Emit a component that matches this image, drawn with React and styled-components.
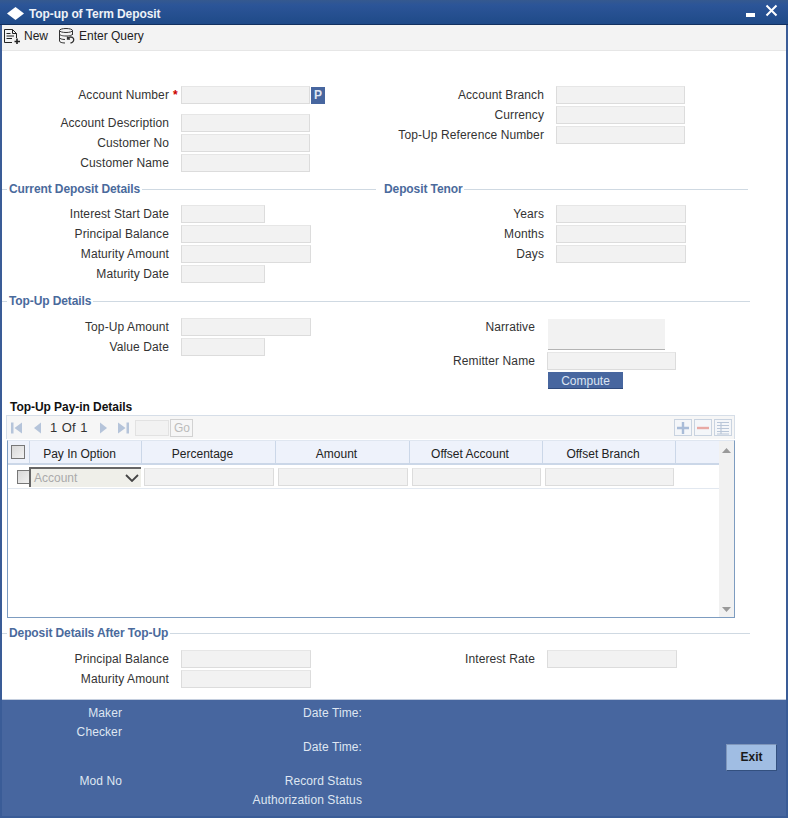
import React from 'react'
import styled, { createGlobalStyle } from 'styled-components'

const Global = createGlobalStyle`
  html, body { margin: 0; padding: 0; background: #fff; }
  * { box-sizing: border-box; }
`

function App() {
  return (
    <>
      <Global />
      <Win>
        <TitleBar>
          <TitleLeft>
            <svg width="17" height="17" viewBox="0 0 17 17"><path d="M8.5 2 17 8.5 8.5 15 0 8.5Z" fill="#fff" /></svg>
            <span>Top-up of Term Deposit</span>
          </TitleLeft>
          <Controls>
            <svg width="10" height="5" viewBox="0 0 10 5"><rect y="0" width="9" height="4" fill="#fff" /></svg>
            <svg width="13" height="13" viewBox="0 0 13 13"><path d="M1.5 1.5 11.5 11.5M11.5 1.5 1.5 11.5" stroke="#fff" strokeWidth="2" /></svg>
          </Controls>
        </TitleBar>
        <Toolbar>
          <ToolBtn>
            <svg width="18" height="18" viewBox="0 0 18 18" fill="none" stroke="#222" strokeWidth="1">
              <path d="M1.5 15.5V2.5H9.5L13.5 6.5V11M9.5 2.5V6.5H13.5M1.5 15.5H9M3.500 6.5H7.5M3.5 9H11M3.5 11.5H9" />
              <path d="M14 11.5V17M11.5 14.5H17" strokeWidth="1.6" />
            </svg>
            New
          </ToolBtn>
          <ToolBtn>
            <svg width="18" height="18" viewBox="0 0 18 18" fill="none" stroke="#333" strokeWidth="1">
              <ellipse cx="8" cy="3.5" rx="6.5" ry="2" />
              <path d="M1.5 3.5V14c0 1.2 2.5 2 5.5 2M14.5 3.5V8M1.5 7c0 1.2 3 2 6.5 2s6.5-.8 6.5-2M1.5 10.5c0 1.2 2.5 2 5.5 2" />
              <path d="M9.5 11.5c1.5-2 5-2 6 0 .8 2-.5 4-3 4.5M9.5 9.5v2.5h2.5" strokeWidth="1.3" />
            </svg>
            Enter Query
          </ToolBtn>
        </Toolbar>

        <Form>
          <Columns $pt={34}>
            <div>
              <Row>
                <Label>Account Number</Label>
                <Star>*</Star>
                <Input $w={129} $ml={5} />
                <LovBtn>P</LovBtn>
              </Row>
              <Row $mt={8}><Label>Account Description</Label><Input $w={129} /></Row>
              <Row><Label>Customer No</Label><Input $w={129} /></Row>
              <Row><Label>Customer Name</Label><Input $w={129} /></Row>
            </div>
            <div>
              <Row><Label $w={168}>Account Branch</Label><Input $w={129} /></Row>
              <Row><Label $w={168}>Currency</Label><Input $w={129} /></Row>
              <Row><Label $w={168}>Top-Up Reference Number</Label><Input $w={129} /></Row>
            </div>
          </Columns>

          <Columns $pt={8}>
            <Legend>Current Deposit Details</Legend>
            <Legend $flush $end={748}>Deposit Tenor</Legend>
          </Columns>
          <Columns $pt={7}>
            <div>
              <Row><Label>Interest Start Date</Label><Input $w={84} /></Row>
              <Row><Label>Principal Balance</Label><Input $w={130} /></Row>
              <Row><Label>Maturity Amount</Label><Input $w={130} /></Row>
              <Row><Label>Maturity Date</Label><Input $w={84} /></Row>
            </div>
            <div>
              <Row><Label $w={168}>Years</Label><Input $w={130} /></Row>
              <Row><Label $w={168}>Months</Label><Input $w={130} /></Row>
              <Row><Label $w={168}>Days</Label><Input $w={130} /></Row>
            </div>
          </Columns>

          <LegendWide $mt={9}>Top-Up Details</LegendWide>
          <Columns $pt={8}>
            <div>
              <Row><Label>Top-Up Amount</Label><Input $w={130} /></Row>
              <Row><Label>Value Date</Label><Input $w={84} /></Row>
            </div>
            <div>
              <NarrativeRow>
                <Label $w={159}>Narrative</Label>
                <NarrativeBox />
              </NarrativeRow>
              <Row $mt={2}><Label $w={159}>Remitter Name</Label><Input $w={129} $ml={12} /></Row>
              <ComputeBtn>Compute</ComputeBtn>
            </div>
          </Columns>

          <BlockTitle>Top-Up Pay-in Details</BlockTitle>
          <Pager>
            <PagerLeft>
              <svg width="14" height="14" viewBox="0 0 14 14"><path d="M1 1.5H3.5V12.5H1ZM12 1.5V12.5L4.5 7Z" fill="#b5c4da" /></svg>
              <PagerGap $w={7} />
              <svg width="12" height="14" viewBox="0 0 12 14"><path d="M10 1.5V12.5L3 7Z" fill="#b5c4da" /></svg>
              <PageText>1 Of 1</PageText>
              <PagerGap $w={11} />
              <svg width="12" height="14" viewBox="0 0 12 14"><path d="M2 1.5V12.5L9 7Z" fill="#b5c4da" /></svg>
              <PagerGap $w={6} />
              <svg width="14" height="14" viewBox="0 0 14 14"><path d="M2 1.5V12.5L9.5 7ZM10.5 1.5H13V12.5H10.5Z" fill="#b5c4da" /></svg>
              <PageInput />
              <GoBtn>Go</GoBtn>
            </PagerLeft>
            <PagerRight>
              <SquareBtn>
                <svg width="14" height="14" viewBox="0 0 14 14"><path d="M7 1V13M1 7H13" stroke="#a9bcd8" strokeWidth="2.4" /></svg>
              </SquareBtn>
              <SquareBtn>
                <svg width="14" height="14" viewBox="0 0 14 14"><path d="M1 7H13" stroke="#e8a9a4" strokeWidth="2.4" /></svg>
              </SquareBtn>
              <SquareBtn>
                <svg width="14" height="14" viewBox="0 0 14 14"><path d="M1 1.5H13M1 4.5H13M1 7.5H13M1 10.5H13M1 13H13M5 1V13" stroke="#b9c6d8" strokeWidth="1.2" /></svg>
              </SquareBtn>
            </PagerRight>
          </Pager>
          <Grid>
            <GridMain>
              <HeadRow>
                <HeadCheck><Check /></HeadCheck>
                <HeadCell $w={112}>Pay In Option</HeadCell>
                <HeadCell $w={134}>Percentage</HeadCell>
                <HeadCell $w={134}>Amount</HeadCell>
                <HeadCell $w={133}>Offset Account</HeadCell>
                <HeadCell $w={133}>Offset Branch</HeadCell>
              </HeadRow>
              <BodyRow>
                <RowCheck />
                <FakeSelect>
                  Account
                  <svg width="14" height="8" viewBox="0 0 14 8" fill="none"><path d="M1 1 7 7 13 1" stroke="#444" strokeWidth="1.8" /></svg>
                </FakeSelect>
                <Input $w={130} $ml={3} />
                <Input $w={130} $ml={4} />
                <Input $w={129} $ml={4} />
                <Input $w={129} $ml={4} />
              </BodyRow>
            </GridMain>
            <Scroll>
              <svg width="9" height="5" viewBox="0 0 9 5"><path d="M4.5 0 9 5H0Z" fill="#9a9a9a" /></svg>
              <svg width="9" height="5" viewBox="0 0 9 5"><path d="M0 0H9L4.5 5Z" fill="#9a9a9a" /></svg>
            </Scroll>
          </Grid>

          <LegendWide $mt={7}>Deposit Details After Top-Up</LegendWide>
          <Columns $pt={8}>
            <div>
              <Row><Label>Principal Balance</Label><Input $w={130} /></Row>
              <Row><Label>Maturity Amount</Label><Input $w={130} /></Row>
            </div>
            <div>
              <Row><Label $w={159}>Interest Rate</Label><Input $w={130} /></Row>
            </div>
          </Columns>
        </Form>

        <Footer>
          <FootCol $w={120}>
            <FootLabel $h={19}>Maker</FootLabel>
            <FootLabel $h={19}>Checker</FootLabel>
            <FootLabel $h={30} />
            <FootLabel $h={19}>Mod No</FootLabel>
          </FootCol>
          <FootCol $w={240}>
            <FootLabel $h={19}>Date Time:</FootLabel>
            <FootLabel $h={14} />
            <FootLabel $h={20}>Date Time:</FootLabel>
            <FootLabel $h={15} />
            <FootLabel $h={19}>Record Status</FootLabel>
            <FootLabel $h={19}>Authorization Status</FootLabel>
          </FootCol>
          <ExitBtn>Exit</ExitBtn>
        </Footer>
      </Win>
    </>
  )
}

export default App

const Win = styled.div`
  width: 788px;
  height: 818px;
  display: flex;
  flex-direction: column;
  background: #fff;
  border-left: 2px solid #3a5c97;
  border-right: 2px solid #3a5c97;
  border-bottom: 2px solid #3a5c97;
  font-family: "Liberation Sans", Arial, sans-serif;
  font-size: 12px;
  color: #333;
`

const TitleBar = styled.div`
  height: 25px;
  flex: none;
  margin: 0 -2px;
  padding: 3px 10px 0 7px;
  display: flex;
  align-items: center;
  justify-content: space-between;
  background: linear-gradient(#35598f, #2c5598 20%, #1f4a88);
  border-bottom: 1px solid #12305f;
  color: #eef2f8;
  font-weight: bold;
  letter-spacing: -0.1px;
`

const TitleLeft = styled.div`
  display: flex;
  align-items: center;
  gap: 5px;
  svg { margin-top: -1px; }
`

const Controls = styled.div`
  display: flex;
  align-items: flex-start;
  gap: 9px;
  margin-top: -6px;
  svg:first-child { margin-top: 9px; }
`

const Toolbar = styled.div`
  height: 26px;
  flex: none;
  padding: 0 0 4px 1px;
  display: flex;
  align-items: center;
  gap: 10px;
  background: #f3f3f3;
  border-bottom: 1px solid #e6e6e6;
`

const ToolBtn = styled.div`
  display: flex;
  align-items: center;
  gap: 3px;
  color: #222;
`

const Form = styled.div`
  flex: none;
  height: 648px;
`

const Columns = styled.div`
  display: grid;
  grid-template-columns: 374px 1fr;
  padding-top: ${p => p.$pt || 0}px;
`

const Row = styled.div`
  height: 20px;
  margin-top: ${p => p.$mt || 0}px;
  display: flex;
  align-items: center;
`

const Label = styled.div`
  width: ${p => p.$w || 167}px;
  flex: none;
  text-align: right;
  white-space: nowrap;
  line-height: 14px;
  letter-spacing: 0.1px;
`

const Star = styled.span`
  color: #cc0000;
  font-weight: bold;
  margin-left: 4px;
  width: 3px;
  margin-right: 0;
`

const Input = styled.div`
  width: ${p => p.$w}px;
  height: 18px;
  flex: none;
  margin-left: ${p => p.$ml ?? 12}px;
  background: #f2f2f2;
  border: 1px solid #dcdcdc;
  border-top-color: #e6e6e6;
`

const LovBtn = styled.div`
  width: 14px;
  height: 17px;
  margin-left: 1px;
  background: #47669f;
  color: #dfe6f2;
  font-weight: bold;
  text-align: center;
  line-height: 17px;
`

const Legend = styled.div`
  height: 16px;
  display: flex;
  align-items: center;
  gap: 2px;
  padding-left: ${p => (p.$flush ? 8 : 0)}px;
  width: ${p => (p.$end ? p.$end - 376 : 374)}px;
  color: #4a6a9c;
  font-weight: bold;
  white-space: nowrap;
  letter-spacing: -0.1px;
  &::before {
    content: '';
    display: ${p => (p.$flush ? 'none' : 'block')};
    width: 5px;
    height: 1px;
    background: #cfd9e2;
  }
  &::after {
    content: '';
    flex: 1;
    height: 1px;
    background: #cfd9e2;
  }
`

const LegendWide = styled(Legend)`
  width: 748px;
  margin-top: ${p => p.$mt || 0}px;
`

const NarrativeRow = styled.div`
  height: 32px;
  padding-top: 3px;
  display: flex;
  align-items: flex-start;
`

const NarrativeBox = styled.div`
  width: 117px;
  height: 31px;
  margin: -1px 0 0 13px;
  background: #f2f2f2;
  border-bottom: 1px solid #b4b4b4;
`

const ComputeBtn = styled.div`
  width: 75px;
  height: 17px;
  margin: 1px 0 0 172px;
  background: #47669f;
  border-bottom: 1px solid #2f4a7c;
  color: #dbe4f2;
  text-align: center;
  line-height: 18px;
  font-size: 12px;
`

const BlockTitle = styled.div`
  height: 16px;
  margin-top: 10px;
  padding-left: 8px;
  font-weight: bold;
  color: #111;
  line-height: 16px;
  letter-spacing: -0.05px;
`

const Pager = styled.div`
  width: 729px;
  height: 24px;
  margin-left: 4px;
  display: flex;
  align-items: center;
  justify-content: space-between;
  padding: 0 2px 0 3px;
  background: #f6f6f6;
  border: 1px solid #d6dee8;
  border-bottom: none;
`

const PagerLeft = styled.div`
  display: flex;
  align-items: center;
`

const PagerGap = styled.div`
  width: ${p => p.$w}px;
  flex: none;
`

const PageText = styled.span`
  margin-left: 7px;
  color: #333;
  font-size: 13px;
  word-spacing: 1px;
`

const PageInput = styled.div`
  width: 34px;
  height: 16px;
  margin-left: 5px;
  background: #f2f2f2;
  border: 1px solid #e2e2e2;
`

const GoBtn = styled.div`
  width: 23px;
  height: 18px;
  margin-left: 1px;
  border: 1px solid #d2d2d2;
  color: #bbb;
  text-align: center;
  line-height: 17px;
`

const PagerRight = styled.div`
  display: flex;
  gap: 2px;
`

const SquareBtn = styled.div`
  width: 18px;
  height: 17px;
  display: flex;
  align-items: center;
  justify-content: center;
  background: #f4f6f9;
  border: 1px solid #c9d3e0;
`

const Grid = styled.div`
  width: 728px;
  height: 178px;
  margin: 1px 0 0 5px;
  display: flex;
  border: 1px solid #7d9cc0;
  border-top: 1px solid #dfe6f0;
`

const GridMain = styled.div`
  flex: 1;
  min-width: 0;
`

const HeadRow = styled.div`
  height: 24px;
  display: flex;
  background: #eef2fb;
  border-bottom: 2px solid #cbd7e8;
`

const HeadCheck = styled.div`
  width: 22px;
  flex: none;
  display: flex;
  align-items: center;
  justify-content: center;
  padding-right: 1px;
  border-right: 1px solid #cbd7e8;
`

const Check = styled.div`
  width: 14px;
  height: 14px;
  background: linear-gradient(135deg, #d8d8d8, #f2f2f2);
  border: 1px solid #777;
`

const HeadCell = styled.div`
  width: ${p => p.$w}px;
  flex: none;
  padding-right: 12px;
  text-align: center;
  line-height: 26px;
  color: #222;
  border-right: 1px solid #cbd7e8;
`

const BodyRow = styled.div`
  height: 24px;
  display: flex;
  align-items: center;
  border-bottom: 1px solid #e2e8f0;
`

const RowCheck = styled(Check)`
  margin-left: 9px;
  margin-right: -1px;
  flex: none;
`

const FakeSelect = styled.div`
  width: 112px;
  height: 20px;
  margin-left: -1px;
  flex: none;
  display: flex;
  align-items: center;
  justify-content: space-between;
  padding: 0 2px 0 3px;
  background: #efefe9;
  border-top: 2px solid #666;
  border-left: 2px solid #666;
  color: #aaa;
`

const Scroll = styled.div`
  width: 15px;
  flex: none;
  display: flex;
  flex-direction: column;
  align-items: center;
  justify-content: space-between;
  padding: 7px 0 5px;
  background: #f1f1f1;
`

const Footer = styled.div`
  flex: 1;
  display: flex;
  padding-top: 4px;
  background: #47669f;
  border-top: 1px solid #c4cede;
  color: #dfe6f2;
`

const FootCol = styled.div`
  width: ${p => p.$w}px;
  flex: none;
  display: flex;
  flex-direction: column;
  text-align: right;
  letter-spacing: 0.1px;
`

const FootLabel = styled.div`
  height: ${p => p.$h}px;
  line-height: ${p => p.$h}px;
  white-space: nowrap;
`

const ExitBtn = styled.div`
  width: 51px;
  height: 27px;
  margin: 40px 0 0 364px;
  background: #a0bde3;
  border: 1px solid #7f96bb;
  border-right-color: #33507f;
  border-bottom-color: #33507f;
  color: #1a1a1a;
  font-weight: bold;
  text-align: center;
  line-height: 25px;
`
